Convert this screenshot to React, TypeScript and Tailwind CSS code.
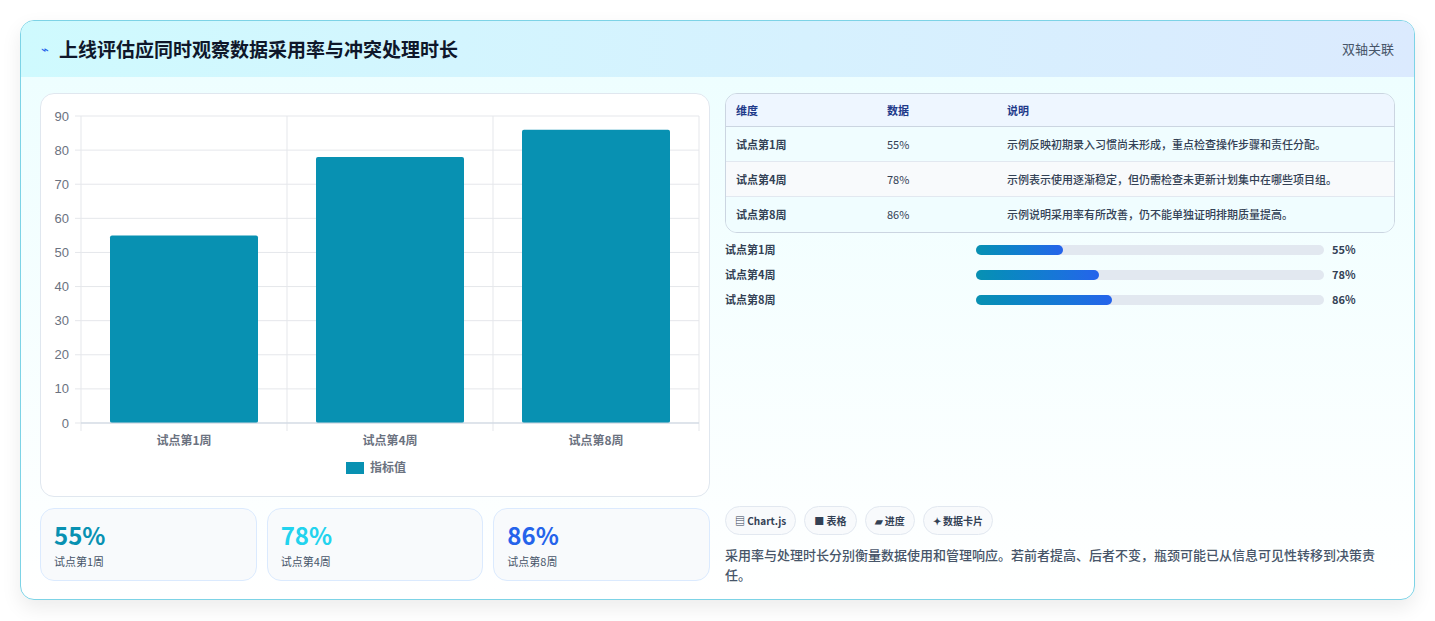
import React from "react";

const F = { fontFamily: '"Noto Sans CJK SC", "Noto Sans", sans-serif' };
const data = [
  { k: "试点第1周", v: 55, d: "示例反映初期录入习惯尚未形成，重点检查操作步骤和责任分配。" },
  { k: "试点第4周", v: 78, d: "示例表示使用逐渐稳定，但仍需检查未更新计划集中在哪些项目组。" },
  { k: "试点第8周", v: 86, d: "示例说明采用率有所改善，仍不能单独证明排期质量提高。" },
];

function Chart() {
  const x0 = 40, x1 = 658, y0 = 22, y1 = 329;
  const ys = [90, 80, 70, 60, 50, 40, 30, 20, 10, 0];
  const cw = (x1 - x0) / 3;
  const Y = (v: number) => y1 - (v / 90) * (y1 - y0);
  return (
    <svg width="670" height="403" style={{ fontFamily: '"Liberation Sans", "Noto Sans CJK SC", sans-serif' }}>
      {ys.map((v) => (
        <g key={v}>
          <line x1={x0 - 6} x2={x1} y1={Y(v)} y2={Y(v)} stroke="#e5e7eb" />
          <text x={x0 - 12} y={Y(v) + 4.5} textAnchor="end" fontSize="13" fill="#6b7280">{v}</text>
        </g>
      ))}
      {[0, 1, 2, 3].map((i) => (
        <line key={i} x1={x0 + i * cw} x2={x0 + i * cw} y1={y0} y2={y1 + 8} stroke="#e5e7eb" />
      ))}
      {data.map((d, i) => (
        <g key={d.k}>
          <rect x={x0 + i * cw + 29} y={Y(d.v)} width={cw - 58} height={y1 - Y(d.v)} rx="2" fill="#0891b2" />
          <text x={x0 + i * cw + cw / 2} y={y1 + 22} textAnchor="middle" fontSize="12" fontWeight="bold" fill="#6b7280" style={F}>{d.k}</text>
        </g>
      ))}
      <line x1={x0} x2={x1} y1={y1} y2={y1} stroke="#cbd5e1" />
      <rect x="305" y="368" width="18" height="12" fill="#0891b2" />
      <text x="329" y="378" fontSize="12" fontWeight="bold" fill="#6b7280" style={F}>指标值</text>
    </svg>
  );
}

export default function App() {
  return (
    <div className="w-[1435px] h-[621px] bg-white pt-[20px] px-[20px]" style={F}>
      <div className="w-[1395px] h-[580px] rounded-[14px] border border-[#7dd3e6] overflow-hidden bg-gradient-to-b from-[#ecfeff] to-white shadow-[0_8px_20px_rgba(0,0,0,0.08)]">
        <div className="h-[56px] flex items-center justify-between px-[20px] bg-gradient-to-r from-[#cffafe] to-[#dbeafe]">
          <div className="flex items-center gap-[10px]">
            <span className="text-[#2563eb] text-[13px]">⌁</span>
            <span className="text-[19px] font-bold text-[#0f172a]">上线评估应同时观察数据采用率与冲突处理时长</span>
          </div>
          <span className="text-[13px] text-[#475569]">双轴关联</span>
        </div>
        <div className="flex gap-[15px] px-[19px] pt-[16px]">
          <div className="w-[670px] flex flex-col gap-[11px]">
            <div className="h-[404px] rounded-[14px] border border-[#e0e7ef] bg-white overflow-hidden"><Chart /></div>
            <div className="grid grid-cols-3 gap-[10px]">
              {data.map((d, i) => (
                <div key={d.k} className="h-[73px] rounded-[14px] border border-[#dbeafe] bg-[#f8fafc] px-[13px] pt-[12px]">
                  <div className={`text-[24px] font-bold leading-[28px] ${["text-[#0891b2]", "text-[#22d3ee]", "text-[#2563eb]"][i]}`}>{d.v}%</div>
                  <div className="text-[11px] text-[#475569] mt-[4px]">{d.k}</div>
                </div>
              ))}
            </div>
          </div>
          <div className="w-[670px] flex flex-col">
            <div className="rounded-[12px] border border-[#cbd5e1] overflow-hidden text-[11px]">
              <div className="flex h-[33px] items-center bg-[#eef6ff] text-[#1e3a8a] font-bold border-b border-[#cbd5e1]">
                <div className="w-[161px] pl-[10px]">维度</div><div className="w-[120px]">数据</div><div>说明</div>
              </div>
              {data.map((d, i) => (
                <div key={d.k} className={`flex h-[35px] items-center text-[#334155] ${i < 2 ? "border-b border-[#e2e8f0]" : ""} ${i === 1 ? "bg-[#f8fafc]" : "bg-[#f0fdff]"}`}>
                  <div className="w-[161px] pl-[10px] font-bold">{d.k}</div><div className="w-[120px]">{d.v}%</div><div className="font-medium">{d.d}</div>
                </div>
              ))}
            </div>
            <div className="flex flex-col gap-[10px] mt-[9px]">
              {data.map((d) => (
                <div key={d.k} className="flex items-center h-[15px] text-[11px] font-bold text-[#334155]">
                  <div className="w-[251px]">{d.k}</div>
                  <div className="w-[348px] h-[10px] rounded-full bg-[#e2e8f0]">
                    <div className="h-full rounded-full bg-gradient-to-r from-[#0891b2] to-[#2563eb]" style={{ width: `${d.v / 100 * 348 * 0.454}px` }} />
                  </div>
                  <div className="ml-[8px]">{d.v}%</div>
                </div>
              ))}
            </div>
            <div className="flex gap-[8px] mt-[199px]">
              {["▤ Chart.js", "■ 表格", "▰ 进度", "✦ 数据卡片"].map((t) => (
                <span key={t} className="h-[29px] px-[9px] flex items-center rounded-full border border-[#e2e8f0] bg-[#f8fafc] text-[10px] font-bold text-[#334155]">{t}</span>
              ))}
            </div>
            <p className="mt-[10px] text-[13px] leading-[20px] text-[#475569] font-medium">采用率与处理时长分别衡量数据使用和管理响应。若前者提高、后者不变，瓶颈可能已从信息可见性转移到决策责任。</p>
          </div>
        </div>
      </div>
    </div>
  );
}
